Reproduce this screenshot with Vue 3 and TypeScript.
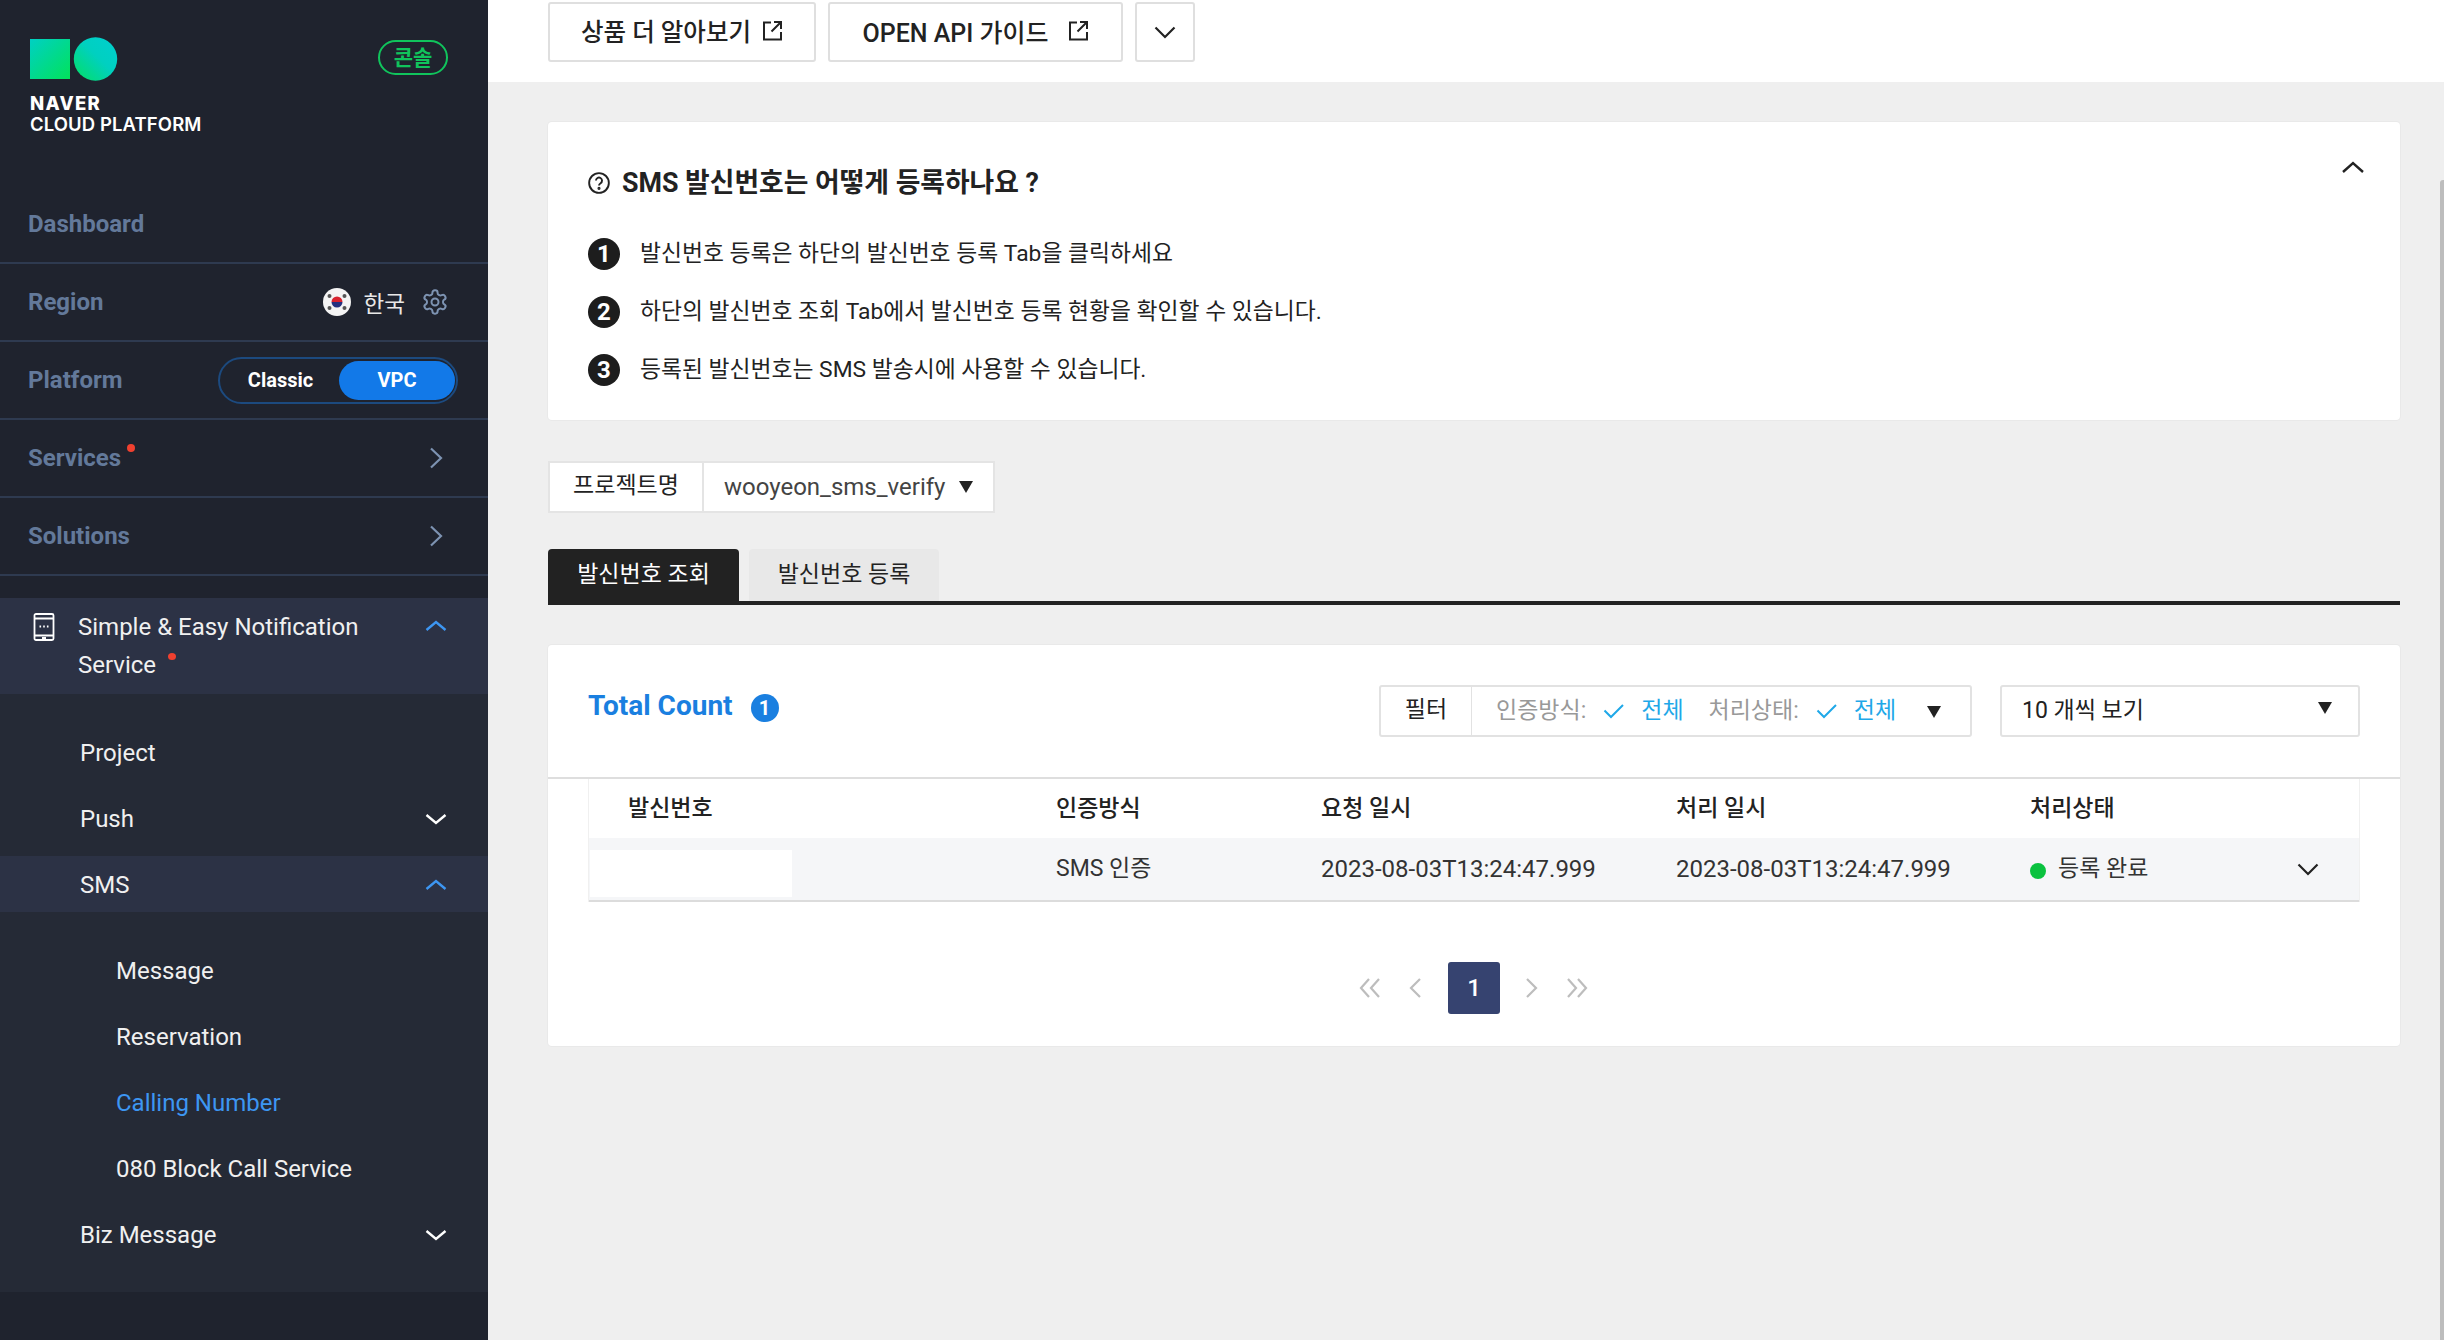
<script setup lang="ts">
interface TopRow { label: string; dot?: boolean }
const arrowRows: TopRow[] = [
  { label: 'Services', dot: true },
  { label: 'Solutions' },
]
const steps: string[] = [
  '발신번호 등록은 하단의 발신번호 등록 Tab을 클릭하세요',
  '하단의 발신번호 조회 Tab에서 발신번호 등록 현황을 확인할 수 있습니다.',
  '등록된 발신번호는 SMS 발송시에 사용할 수 있습니다.',
]
const subItems: { label: string; active?: boolean }[] = [
  { label: 'Message' },
  { label: 'Reservation' },
  { label: 'Calling Number', active: true },
  { label: '080 Block Call Service' },
]
const filters: string[] = ['인증방식:', '처리상태:']
</script>

<template>
  <div class="page">
    <aside class="side">
      <div class="brand">
        <div class="logo">
          <div class="marks">
            <svg width="88" height="44" viewBox="0 0 88 44">
              <defs>
                <linearGradient id="gs" x1="0" y1="0" x2="1" y2="1">
                  <stop offset="0" stop-color="#00d0c4" />
                  <stop offset="1" stop-color="#02e25a" />
                </linearGradient>
                <linearGradient id="gc" x1="0" y1="1" x2="1" y2="0">
                  <stop offset="0" stop-color="#04e060" />
                  <stop offset="0.55" stop-color="#00d0c0" />
                  <stop offset="1" stop-color="#00cfd0" />
                </linearGradient>
              </defs>
              <rect x="0" y="2" width="40" height="40" fill="url(#gs)" />
              <circle cx="65.5" cy="22" r="21.7" fill="url(#gc)" />
            </svg>
          </div>
          <div class="word bold">NAVER</div>
          <div class="word">CLOUD PLATFORM</div>
        </div>
        <div class="console">콘솔</div>
      </div>

      <div class="row"><span class="row-label">Dashboard</span></div>
      <div class="row">
        <span class="row-label">Region</span>
        <div class="region">
          <svg class="flag" width="28" height="28" viewBox="0 0 28 28">
            <circle cx="14" cy="14" r="14" fill="#f4f4f4" />
            <path d="M8.5 14a5.5 5.5 0 0 1 11 0z" fill="#d8232f" />
            <path d="M8.5 14a5.5 5.5 0 0 0 11 0z" fill="#24307f" />
            <g fill="#555">
              <circle cx="6.5" cy="8" r="2" /><circle cx="21.5" cy="8" r="2" />
              <circle cx="6.5" cy="20" r="2" /><circle cx="21.5" cy="20" r="2" />
            </g>
          </svg>
          <span class="region-name">한국</span>
          <svg class="gear" width="28" height="28" viewBox="0 0 24 24" fill="none" stroke="#7d93b2" stroke-width="1.7">
            <path d="M12.22 2h-.44a2 2 0 0 0-2 2v.18a2 2 0 0 1-1 1.73l-.43.25a2 2 0 0 1-2 0l-.15-.08a2 2 0 0 0-2.73.73l-.22.38a2 2 0 0 0 .73 2.73l.15.1a2 2 0 0 1 1 1.72v.51a2 2 0 0 1-1 1.74l-.15.09a2 2 0 0 0-.73 2.73l.22.38a2 2 0 0 0 2.73.73l.15-.08a2 2 0 0 1 2 0l.43.25a2 2 0 0 1 1 1.73V20a2 2 0 0 0 2 2h.44a2 2 0 0 0 2-2v-.18a2 2 0 0 1 1-1.73l.43-.25a2 2 0 0 1 2 0l.15.08a2 2 0 0 0 2.73-.73l.22-.39a2 2 0 0 0-.73-2.73l-.15-.08a2 2 0 0 1-1-1.74v-.5a2 2 0 0 1 1-1.74l.15-.09a2 2 0 0 0 .73-2.73l-.22-.38a2 2 0 0 0-2.73-.73l-.15.08a2 2 0 0 1-2 0l-.43-.25a2 2 0 0 1-1-1.73V4a2 2 0 0 0-2-2z" />
            <circle cx="12" cy="12" r="3" />
          </svg>
        </div>
      </div>
      <div class="row">
        <span class="row-label">Platform</span>
        <div class="toggle">
          <span class="opt">Classic</span>
          <span class="opt on">VPC</span>
        </div>
      </div>
      <div v-for="r in arrowRows" :key="r.label" class="row">
        <span class="row-label">{{ r.label }}<i v-if="r.dot" class="dot services-dot"></i></span>
        <svg class="row-arrow" width="14" height="22" viewBox="0 0 14 22" fill="none" stroke="#7d93b2" stroke-width="2.2">
          <path d="M2 1.5 12 11 2 20.5" />
        </svg>
      </div>

      <div class="section-head">
        <svg class="sec-icon" width="22" height="28" viewBox="0 0 22 28" fill="none" stroke="#fff" stroke-width="1.8">
          <rect x="1.5" y="1" width="19" height="26" rx="1.5" />
          <path d="M1.5 5.5h19M1.5 22.5h19M9 25h4" />
          <path d="M6.5 13.5h1.6M10.2 13.5h1.6M13.9 13.5h1.6" stroke-width="2" />
        </svg>
        <div class="sec-title">Simple &amp; Easy Notification<br />Service<i class="dot sec-dot"></i></div>
        <svg class="chev" width="22" height="12" viewBox="0 0 22 12" fill="none" stroke="#3d96f2" stroke-width="2.4">
          <path d="M1.5 10 11 2l9.5 8" />
        </svg>
      </div>

      <div class="submenu">
        <div class="item"><span>Project</span></div>
        <div class="item">
          <span>Push</span>
          <svg class="chev" width="22" height="12" viewBox="0 0 22 12" fill="none" stroke="#fff" stroke-width="2.4"><path d="M1.5 2 11 10l9.5-8" /></svg>
        </div>
        <div class="item open">
          <span>SMS</span>
          <svg class="chev" width="22" height="12" viewBox="0 0 22 12" fill="none" stroke="#3d96f2" stroke-width="2.4"><path d="M1.5 10 11 2l9.5 8" /></svg>
        </div>
        <div class="sub2">
          <div v-for="s in subItems" :key="s.label" class="item deep" :class="{ active: s.active }">
            <span>{{ s.label }}</span>
          </div>
        </div>
        <div class="item">
          <span>Biz Message</span>
          <svg class="chev" width="22" height="12" viewBox="0 0 22 12" fill="none" stroke="#fff" stroke-width="2.4"><path d="M1.5 2 11 10l9.5-8" /></svg>
        </div>
      </div>
    </aside>

    <main class="main">
      <header class="topbar">
        <button class="tbtn one">
          <span>상품 더 알아보기</span>
          <svg width="21" height="21" viewBox="0 0 21 21" fill="none" stroke="#222" stroke-width="2"><path d="M9 2.5H2v17h17v-7.5M12 2h7v7M19 2 9.5 11.5" /></svg>
        </button>
        <button class="tbtn two">
          <span>OPEN API 가이드</span>
          <svg width="21" height="21" viewBox="0 0 21 21" fill="none" stroke="#222" stroke-width="2"><path d="M9 2.5H2v17h17v-7.5M12 2h7v7M19 2 9.5 11.5" /></svg>
        </button>
        <button class="tbtn three">
          <svg width="22" height="13" viewBox="0 0 22 13" fill="none" stroke="#222" stroke-width="2.2"><path d="M1.5 1.5 11 11l9.5-9.5" /></svg>
        </button>
      </header>

      <div class="content">
        <section class="help card">
          <svg class="collapse" width="22" height="12" viewBox="0 0 22 12" fill="none" stroke="#222" stroke-width="2.4"><path d="M1 11 11 2l10 9" /></svg>
          <h2 class="help-title">
            <svg width="22" height="22" viewBox="0 0 21 21" fill="none" stroke="#222" stroke-width="1.8">
              <circle cx="10.5" cy="10.5" r="9.4" />
              <path d="M7.6 8.2a2.9 2.9 0 1 1 4.4 2.5c-1 .6-1.5 1.1-1.5 2.3" />
              <circle cx="10.5" cy="15.6" r=".6" fill="#222" />
            </svg>
            <span>SMS 발신번호는 어떻게 등록하나요 ?</span>
          </h2>
          <ol class="steps">
            <li v-for="(s, i) in steps" :key="i" class="step">
              <span class="num">{{ i + 1 }}</span>
              <span>{{ s }}</span>
            </li>
          </ol>
        </section>

        <div class="project">
          <div class="project-label">프로젝트명</div>
          <div class="project-value"><span>wooyeon_sms_verify</span><i class="tri"></i></div>
        </div>

        <div class="tabs">
          <div class="tab active">발신번호 조회</div>
          <div class="tab">발신번호 등록</div>
        </div>

        <section class="list card">
          <div class="list-head">
            <div class="total">
              <span class="total-label">Total Count</span>
              <span class="total-badge">1</span>
            </div>
            <div class="filter">
              <div class="filter-label">필터</div>
              <div class="filter-body">
                <div v-for="f in filters" :key="f" class="chip">
                  <span class="chip-name">{{ f }}</span>
                  <svg width="22" height="16" viewBox="0 0 22 16" fill="none" stroke="#1fa8e8" stroke-width="2"><path d="M1.5 7.5 8 14 20 2" /></svg>
                  <span class="chip-val">전체</span>
                </div>
                <i class="tri filter-tri"></i>
              </div>
            </div>
            <div class="perpage">
              <span>10 개씩 보기</span>
              <i class="tri per-tri"></i>
            </div>
          </div>

          <div class="table">
            <div class="tr th">
              <div class="c1">발신번호</div>
              <div class="c2">인증방식</div>
              <div class="c3">요청 일시</div>
              <div class="c4">처리 일시</div>
              <div class="c5">처리상태</div>
            </div>
            <div class="tr td">
              <div class="c1"><div class="mask"></div></div>
              <div class="c2">SMS 인증</div>
              <div class="c3 date">2023-08-03T13:24:47.999</div>
              <div class="c4 date">2023-08-03T13:24:47.999</div>
              <div class="c5 status"><i class="ok"></i><span>등록 완료</span>
                <svg class="row-chev" width="22" height="13" viewBox="0 0 22 13" fill="none" stroke="#222" stroke-width="2.2"><path d="M1.5 1.5 11 11l9.5-9.5" /></svg>
              </div>
            </div>
          </div>

          <div class="pager">
            <svg width="22" height="20" viewBox="0 0 22 20" fill="none" stroke="#bdbdbd" stroke-width="2.2"><path d="M10 1 2 10l8 9M20 1l-8 9 8 9" /></svg>
            <svg class="p-single" width="12" height="20" viewBox="0 0 12 20" fill="none" stroke="#bdbdbd" stroke-width="2.2"><path d="M11 1 2 10l9 9" /></svg>
            <span class="page-on">1</span>
            <svg class="p-single-r" width="12" height="20" viewBox="0 0 12 20" fill="none" stroke="#bdbdbd" stroke-width="2.2"><path d="m1 1 9 9-9 9" /></svg>
            <svg class="p-last" width="22" height="20" viewBox="0 0 22 20" fill="none" stroke="#bdbdbd" stroke-width="2.2"><path d="m2 1 8 9-8 9M12 1l8 9-8 9" /></svg>
          </div>
        </section>
      </div>
      <div class="scroll-thumb"></div>
    </main>
  </div>
</template>

<style scoped>
.page {
  display: flex;
  width: 2444px;
  height: 1340px;
  overflow: hidden;
  font-family: Roboto, "Noto Sans CJK KR", sans-serif;
  color: #222;
}
.side {
  flex: 0 0 488px;
  background: #1f232e;
  font-family: Roboto, "Noto Sans CJK KR", sans-serif;
  color: #fff;
}
.brand {
  height: 186px;
  padding: 37px 40px 0 30px;
  box-sizing: border-box;
  display: flex;
  justify-content: space-between;
  align-items: flex-start;
}
.marks { height: 44px; margin-bottom: 12px; }
.marks svg { display: block; }
.word {
  font-family: Inter, sans-serif;
  font-size: 18.5px;
  line-height: 21px;
  font-weight: 600;
  color: #fff;
  letter-spacing: 0.1px;
}
.word.bold { font-weight: 800; letter-spacing: 1.3px; }
.console {
  margin-top: 3px;
  width: 70px;
  height: 35px;
  box-sizing: border-box;
  border: 2.5px solid #10c45c;
  border-radius: 18px;
  color: #10c45c;
  font-family: "Noto Sans CJK KR", sans-serif;
  font-weight: 700;
  font-size: 21px;
  line-height: 29px;
  text-align: center;
}
.row {
  height: 78px;
  box-sizing: border-box;
  border-bottom: 2px solid #2e3a50;
  padding: 0 41px 0 28px;
  display: flex;
  align-items: center;
  justify-content: space-between;
}
.row-label {
  font-size: 24px;
  font-weight: 700;
  color: #63799a;
  position: relative;
}
.dot {
  position: absolute;
  width: 8px;
  height: 8px;
  border-radius: 50%;
  background: #f0402f;
}
.services-dot { right: -14px; top: 0; }
.region { display: flex; align-items: center; margin-right: -2px; }
.flag { margin-right: 13px; }
.region-name {
  font-family: "Noto Sans CJK KR", sans-serif;
  font-size: 22.5px;
  color: #e8e8e8;
  margin-right: 16px;
}
.toggle {
  margin-right: -11px;
  width: 240px;
  height: 47px;
  box-sizing: border-box;
  border: 2px solid #1c4a7f;
  border-radius: 24px;
  padding: 2px;
  display: flex;
}
.opt {
  flex: 0 0 117px;
  text-align: center;
  font-size: 20px;
  font-weight: 700;
  line-height: 39px;
  color: #fff;
}
.opt.on {
  flex: 0 0 116px;
  background: #1279e8;
  border-radius: 20px;
}
.row-arrow { margin-right: 4px; }
.section-head {
  margin-top: 22px;
  height: 96px;
  background: #2c3245;
  display: flex;
  align-items: flex-start;
  padding: 15px 41px 0 33px;
  box-sizing: border-box;
  position: relative;
}
.sec-icon { flex: none; }
.sec-title {
  flex: 1;
  margin-left: 23px;
  margin-top: -5px;
  font-size: 24px;
  line-height: 38px;
  color: #f0f0f0;
  position: relative;
}
.sec-dot { left: 90px; top: 45px; height: 7px; }
.section-head .chev { margin-top: 7px; }
.submenu {
  background: #252a36;
  padding: 30px 0;
}
.item {
  height: 56px;
  box-sizing: border-box;
  margin-bottom: 10px;
  padding: 2px 41px 0 80px;
  display: flex;
  align-items: center;
  justify-content: space-between;
  font-size: 24px;
  color: #f0f0f0;
}
.item .chev { margin-bottom: 1px; }
.submenu > .item:last-child { margin-bottom: 0; }
.item.open { background: #2c3245; margin-bottom: 30px; }
.item.deep { padding-left: 116px; }
.item.deep.active { color: #3d96f2; }
.main {
  flex: 1;
  background: #efefef;
  position: relative;
  min-width: 0;
}
.topbar {
  height: 82px;
  box-sizing: border-box;
  background: #fff;
  padding: 2px 0 0 60px;
  display: flex;
  gap: 12px;
}
.tbtn {
  height: 60px;
  box-sizing: border-box;
  background: #fff;
  border: 2px solid #dfdfdf;
  border-radius: 3px;
  display: flex;
  align-items: center;
  justify-content: center;
  gap: 11px;
  font-family: Roboto, "Noto Sans CJK KR", sans-serif;
  font-size: 24.5px;
  font-weight: 500;
  color: #222;
  padding: 0 0 3px;
}
.tbtn.one { width: 268px; }
.tbtn.two { width: 295px; gap: 19px; font-size: 25px; }
.tbtn.three { width: 60px; padding: 0; }
.content {
  padding: 40px 44px 0 60px;
}
.card {
  background: #fff;
  border-radius: 4px;
  box-shadow: 0 0 0 1px #e9e9e9;
  position: relative;
}
.help {
  height: 298px;
  padding: 45px 40px 0;
  box-sizing: border-box;
}
.collapse { position: absolute; right: 36px; top: 39px; }
.help-title {
  margin: 0;
  display: flex;
  align-items: center;
  gap: 12px;
  font-size: 26.8px;
  font-weight: 700;
  line-height: 32px;
  color: #222;
}
.steps {
  list-style: none;
  margin: 0;
  padding: 0;
  margin-top: 39px;
}
.step {
  display: flex;
  align-items: center;
  height: 32px;
  margin-bottom: 26px;
  font-size: 22.8px;
  line-height: 30px;
  color: #222;
  gap: 20px;
}
.num {
  width: 32px;
  height: 32px;
  flex: none;
  border-radius: 50%;
  background: #1d1d1d;
  color: #fff;
  font-weight: 700;
  font-size: 24px;
  line-height: 32px;
  text-align: center;
}
.project {
  margin-top: 41px;
  width: 447px;
  height: 52px;
  box-sizing: border-box;
  display: flex;
  background: #fff;
  border: 2px solid #e4e4e4;
  font-size: 23px;
}
.project-label {
  width: 154px;
  flex: none;
  text-align: center;
  line-height: 46px;
  border-right: 2px solid #e4e4e4;
  box-sizing: border-box;
}
.project-value {
  flex: 1;
  display: flex;
  align-items: center;
  justify-content: space-between;
  padding: 0 20px 0 20px;
  color: #444;
  font-size: 24px;
}
.tri {
  display: block;
  width: 0;
  height: 0;
  border-left: 7px solid transparent;
  border-right: 7px solid transparent;
  border-top: 12px solid #222;
}
.tabs {
  margin-top: 36px;
  display: flex;
  gap: 10px;
  border-bottom: 4px solid #222;
  box-sizing: content-box;
  height: 52px;
}
.tab {
  width: 190px;
  height: 52px;
  background: #e8e8e8;
  border-radius: 4px 4px 0 0;
  text-align: center;
  font-size: 23px;
  line-height: 51px;
  color: #222;
}
.tab.active {
  width: 191px;
  height: 56px;
  background: #222;
  color: #fff;
}
.list {
  margin-top: 40px;
  height: 401px;
}
.list-head {
  height: 134px;
  box-sizing: border-box;
  border-bottom: 2px solid #dedede;
  padding: 40px 40px 0;
  display: flex;
  align-items: flex-start;
}
.total { flex: 1; display: flex; align-items: center; gap: 18px; margin-top: 3px; }
.total-label { font-size: 28px; font-weight: 700; color: #1a7fe0; line-height: 36px; }
.total-badge {
  width: 28px;
  height: 28px;
  border-radius: 50%;
  background: #1a7fe0;
  color: #fff;
  font-size: 20px;
  font-weight: 700;
  line-height: 28px;
  text-align: center;
  margin-top: 3px;
}
.filter {
  width: 593px;
  height: 52px;
  box-sizing: border-box;
  border: 2px solid #e2e2e2;
  border-radius: 3px;
  display: flex;
  font-size: 23px;
  margin-right: 28px;
}
.filter-label {
  width: 90px;
  flex: none;
  text-align: center;
  line-height: 46px;
  border-right: 1px solid #e2e2e2;
}
.filter-body {
  flex: 1;
  display: flex;
  align-items: center;
  padding: 0 0 0 24px;
  position: relative;
}
.chip { display: flex; align-items: center; margin-right: 25px; line-height: 30px; }
.chip-name { color: #999; margin-right: 17px; }
.chip-val { color: #1fa8e8; margin-left: 16px; }
.filter-tri { position: absolute; right: 29px; top: 19px; }
.perpage {
  width: 360px;
  height: 52px;
  box-sizing: border-box;
  border: 2px solid #e2e2e2;
  border-radius: 3px;
  display: flex;
  align-items: center;
  justify-content: space-between;
  padding: 0 26px 1px 20px;
  font-size: 23px;
  line-height: 30px;
}
.per-tri { margin-top: -5px; }
.table {
  margin: 0 40px;
  border-left: 1px solid #f0f0f0;
  border-right: 1px solid #f0f0f0;
}
.tr { display: flex; align-items: center; line-height: 30px; }
.th { height: 59px; font-weight: 500; font-size: 23px; box-sizing: border-box; }
.td {
  height: 64px;
  box-sizing: border-box;
  background: #f5f6f8;
  border-bottom: 2px solid #dcdcdc;
  font-size: 23px;
  color: #333;
  position: relative;
}
.date { font-size: 24px; }
.c1 { width: 467px; padding-left: 39px; box-sizing: border-box; flex: none; }
.td .c1 { padding-left: 0; }
.mask { width: 202px; height: 47px; margin: 9px 0 0 1px; background: #fff; }
.c2 { width: 265px; flex: none; }
.c3 { width: 355px; flex: none; }
.c4 { width: 354px; flex: none; }
.c5 { flex: 1; }
.status { display: flex; align-items: center; }
.ok { width: 16px; height: 16px; border-radius: 50%; background: #0ac23f; margin-right: 12px; margin-top: 4px; }
.row-chev { margin-left: 149px; margin-top: 1px; }
.pager {
  margin-top: 60px;
  display: flex;
  align-items: center;
  justify-content: flex-start;
  padding-left: 811px;
}
.p-single { margin-left: 28px; }
.page-on {
  margin-left: 27px;
  width: 52px;
  height: 52px;
  border-radius: 3px;
  background: #364370;
  color: #fff;
  font-size: 24px;
  font-weight: 500;
  line-height: 52px;
  text-align: center;
}
.p-single-r { margin-left: 26px; }
.p-last { margin-left: 28px; }
.scroll-thumb {
  position: absolute;
  right: 0;
  top: 180px;
  bottom: 0;
  width: 4px;
  background: #bdbdbd;
  border-radius: 3px 0 0 0;
}
</style>

<style>
html, body { margin: 0; padding: 0; background: #efefef; }
</style>
